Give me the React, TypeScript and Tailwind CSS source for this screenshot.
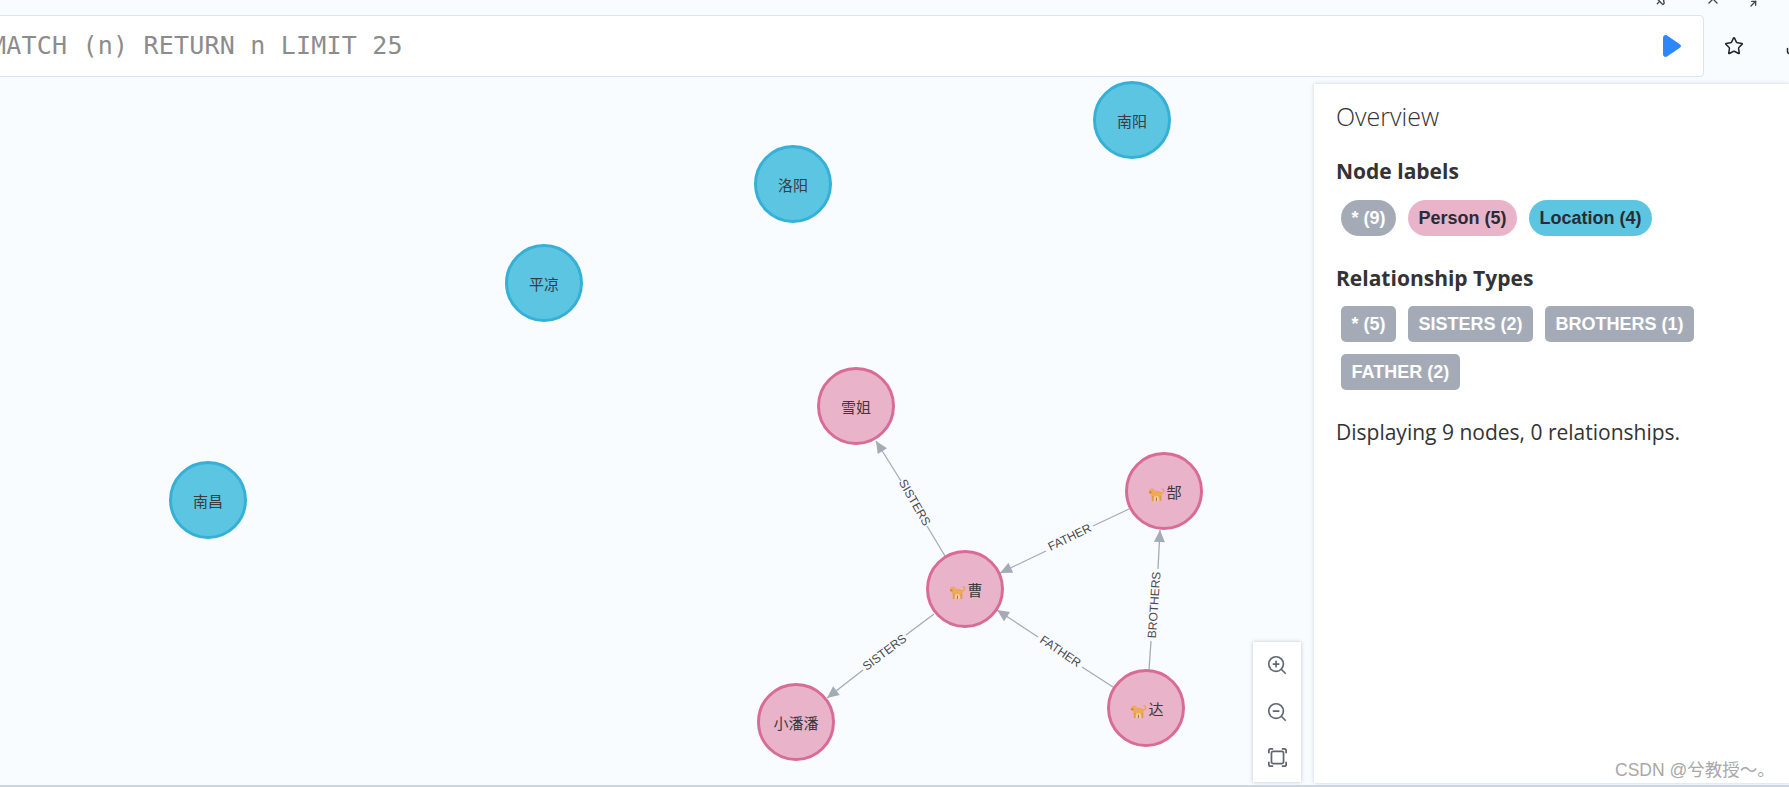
import React from 'react';
import { Star, ZoomIn, ZoomOut, Pin, X, Minimize2, Download } from 'lucide-react';

const BLUE = { fill: '#5cc5e2', stroke: '#35b0d6' };
const PINK = { fill: '#e9b4c9', stroke: '#d96b98' };

type GraphNode = { x: number; y: number; label: string; color: typeof BLUE; pet?: boolean };

const nodes: GraphNode[] = [
  { x: 1132, y: 120, label: '南阳', color: BLUE },
  { x: 793, y: 184, label: '洛阳', color: BLUE },
  { x: 544, y: 283, label: '平凉', color: BLUE },
  { x: 208, y: 500, label: '南昌', color: BLUE },
  { x: 856, y: 406, label: '雪姐', color: PINK },
  { x: 1164, y: 491, label: '郜', color: PINK, pet: true },
  { x: 965, y: 589, label: '曹', color: PINK, pet: true },
  { x: 796, y: 722, label: '小潘潘', color: PINK },
  { x: 1146, y: 708, label: '达', color: PINK, pet: true },
];

// a-b is the line before the caption, c-d the line after it, d is the arrow tip
const edges = [
  { a: [945, 556], b: [927, 526], c: [901, 481], d: [876, 441], angle: 60, label: 'SISTERS', lx: 914, ly: 503 },
  { a: [1129, 509], b: [1093, 526], c: [1046, 551], d: [1000, 573], angle: -26, label: 'FATHER', lx: 1070, ly: 538 },
  { a: [1149, 670], b: [1151, 641], c: [1158, 569], d: [1160, 530], angle: -86, label: 'BROTHERS', lx: 1155, ly: 605 },
  { a: [1113, 687], b: [1082, 667], c: [1038, 637], d: [997, 610], angle: 34, label: 'FATHER', lx: 1060, ly: 652 },
  { a: [934, 614], b: [906, 635], c: [863, 670], d: [827, 698], angle: -37, label: 'SISTERS', lx: 885, ly: 653 },
];

function Pet({ x, y }: { x: number; y: number }) {
  // small orange monkey, no emoji font is available
  return (
    <g transform={`translate(${x} ${y})`}>
      <path d="M3 6c3-2 6-1.500 8-.5 1.800.9 3.500.2 3.700-1.500.2-1.500-1-2.300-2.200-1.800" fill="none" stroke="#eaa550" strokeWidth="1.400" />
      <ellipse cx="7.500" cy="8" rx="5.500" ry="3.200" fill="#eeaa55" />
      <circle cx="3" cy="4.500" r="3" fill="#eeaa55" />
      <rect x="0" y="4.500" width="2.500" height="1.600" fill="#c9803a" />
      <rect x="2.800" y="9" width="1.800" height="5" fill="#e09a48" />
      <rect x="10.500" y="9" width="1.800" height="5" fill="#e09a48" />
      <rect x="5.500" y="9.500" width="4" height="4.500" fill="#f7ddb8" />
      <rect x="6.800" y="10.500" width="1.300" height="3.500" fill="#b0743a" />
    </g>
  );
}

function Edge({ e }: { e: (typeof edges)[number] }) {
  const heading = (Math.atan2(e.d[1] - e.c[1], e.d[0] - e.c[0]) * 180) / Math.PI;
  return (
    <g>
      <line x1={e.a[0]} y1={e.a[1]} x2={e.b[0]} y2={e.b[1]} stroke="#a5abb6" strokeWidth={1.300} />
      <line x1={e.c[0]} y1={e.c[1]} x2={e.d[0]} y2={e.d[1]} stroke="#a5abb6" strokeWidth={1.300} />
      <polygon points="0,0 -12,-5.500 -12,5.500" fill="#a5abb6" transform={`translate(${e.d[0]} ${e.d[1]}) rotate(${heading})`} />
      <text
        x={e.lx}
        y={e.ly}
        fontSize={12}
        fill="#4a4a50"
        textAnchor="middle"
        dominantBaseline="middle"
        transform={`rotate(${e.angle} ${e.lx} ${e.ly})`}
      >
        {e.label}
      </text>
    </g>
  );
}

function Graph() {
  return (
    <svg width={1789} height={787} className="absolute left-0 top-0 font-['Liberation_Sans','Noto_Sans_CJK_SC',sans-serif]">
      {edges.map((e, i) => (
        <Edge key={i} e={e} />
      ))}
      {nodes.map((n) => (
        <g key={n.label}>
          <circle cx={n.x} cy={n.y} r={37.500} fill={n.color.fill} stroke={n.color.stroke} strokeWidth={3} />
          {n.pet && <Pet x={n.x - 15} y={n.y - 4} />}
          <text
            x={n.pet ? n.x + 10 : n.x}
            y={n.y + 3}
            fontSize={15}
            fill="#3a3a40"
            textAnchor="middle"
            dominantBaseline="middle"
          >
            {n.label}
          </text>
        </g>
      ))}
    </svg>
  );
}

function Pill({ children, tone }: { children: React.ReactNode; tone: string }) {
  return (
    <span className={`inline-flex h-9 items-center px-[10.500px] text-[18px] font-bold font-['Liberation_Sans',sans-serif] ${tone}`}>
      {children}
    </span>
  );
}

export default function App() {
  return (
    <div className="relative h-[787px] w-[1789px] overflow-hidden bg-[#f9fcff] font-['Open_Sans',sans-serif]">
      <Graph />

      <div className="absolute left-0 top-0 h-[15px] w-full overflow-hidden text-[#3f4650]">
        <Pin size={16} className="absolute left-[1654px] -top-[9px] rotate-45" />
        <X size={16} className="absolute left-[1705px] -top-[9px]" />
        <Minimize2 size={16} className="absolute left-[1749px] -top-[8px]" />
      </div>

      <div className="relative flex h-[84px] items-start pt-[15px]">
        <div className="-ml-2 flex h-[62px] w-[1712px] shrink-0 items-center justify-between rounded border border-[#d9e5f2] bg-white pr-[22px]">
          <span className="-ml-[2px] font-['DejaVu_Sans_Mono',monospace] text-[25px] tracking-[0.2px] text-[#8c8c8c]">
            MATCH (n) RETURN n LIMIT 25
          </span>
          <svg width={18} height={22} viewBox="0 0 18 22">
            <path d="M0 3c0-2.500 2.500-3.500 4-2.500l12.500 8.500c2 1.300 2 2.700 0 4L4 21.500c-1.500 1-4 0-4-2.500z" fill="#2d87fb" />
          </svg>
        </div>
        <div className="flex h-[62px] shrink-0 items-center gap-[41px] pl-[20px] text-[#20262e]">
          <Star size={20} strokeWidth={1.800} className="shrink-0" />
          <Download size={20} strokeWidth={1.800} className="shrink-0" />
        </div>
      </div>

      <aside className="absolute bottom-1 left-[1314px] top-[84px] w-[475px] bg-white px-[22px] pt-[17px] text-[#333333] shadow-[0_0_4px_rgba(120,135,160,0.35)]">
        <h2 className="text-[25px] font-light leading-[30px]">Overview</h2>

        <h3 className="mt-[26px] text-[21px] font-bold leading-[28px]">Node labels</h3>
        <div className="mt-[15px] flex flex-wrap gap-3 pl-[5px]">
          <Pill tone="rounded-full bg-[#a5abb6] text-white">* (9)</Pill>
          <Pill tone="rounded-full bg-[#e9b4c9] text-[#2a2c33]">Person (5)</Pill>
          <Pill tone="rounded-full bg-[#5cc5e2] text-[#2a2c33]">Location (4)</Pill>
        </div>

        <h3 className="mt-[28px] text-[21px] font-bold leading-[28px]">Relationship Types</h3>
        <div className="mt-[14px] flex w-[370px] flex-wrap gap-3 pl-[5px]">
          <Pill tone="rounded-[5px] bg-[#a5abb6] text-white">* (5)</Pill>
          <Pill tone="rounded-[5px] bg-[#a5abb6] text-white">SISTERS (2)</Pill>
          <Pill tone="rounded-[5px] bg-[#a5abb6] text-white">BROTHERS (1)</Pill>
          <Pill tone="rounded-[5px] bg-[#a5abb6] text-white">FATHER (2)</Pill>
        </div>

        <p className="mt-[27px] text-[21px] leading-[30px]">Displaying 9 nodes, 0 relationships.</p>
      </aside>

      <div className="absolute left-[1253px] top-[642px] flex h-[140px] w-[48px] flex-col items-center gap-[25px] bg-white pt-[12px] text-[#5f6672] shadow-[0_0_4px_rgba(120,135,160,0.45)]">
        <ZoomIn size={22} strokeWidth={1.800} />
        <ZoomOut size={22} strokeWidth={1.800} />
        <svg width={19} height={19} viewBox="0 0 22 22" fill="none" stroke="currentColor" strokeWidth={2}>
          <rect x="4" y="4" width="14" height="14" rx="2" />
          <path d="M1 6V3a2 2 0 0 1 2-2h3M16 1h3a2 2 0 0 1 2 2v3M21 16v3a2 2 0 0 1-2 2h-3M6 21H3a2 2 0 0 1-2-2v-3" />
        </svg>
      </div>

      <span className="absolute left-[1615px] top-[757px] font-['Liberation_Sans','Noto_Sans_CJK_SC',sans-serif] text-[17.500px] text-[#a8a8a8]">
        CSDN @兮教授～。
      </span>

      <div className="absolute bottom-0 left-0 h-[2px] w-full bg-[#cdd5e0]" />
    </div>
  );
}
